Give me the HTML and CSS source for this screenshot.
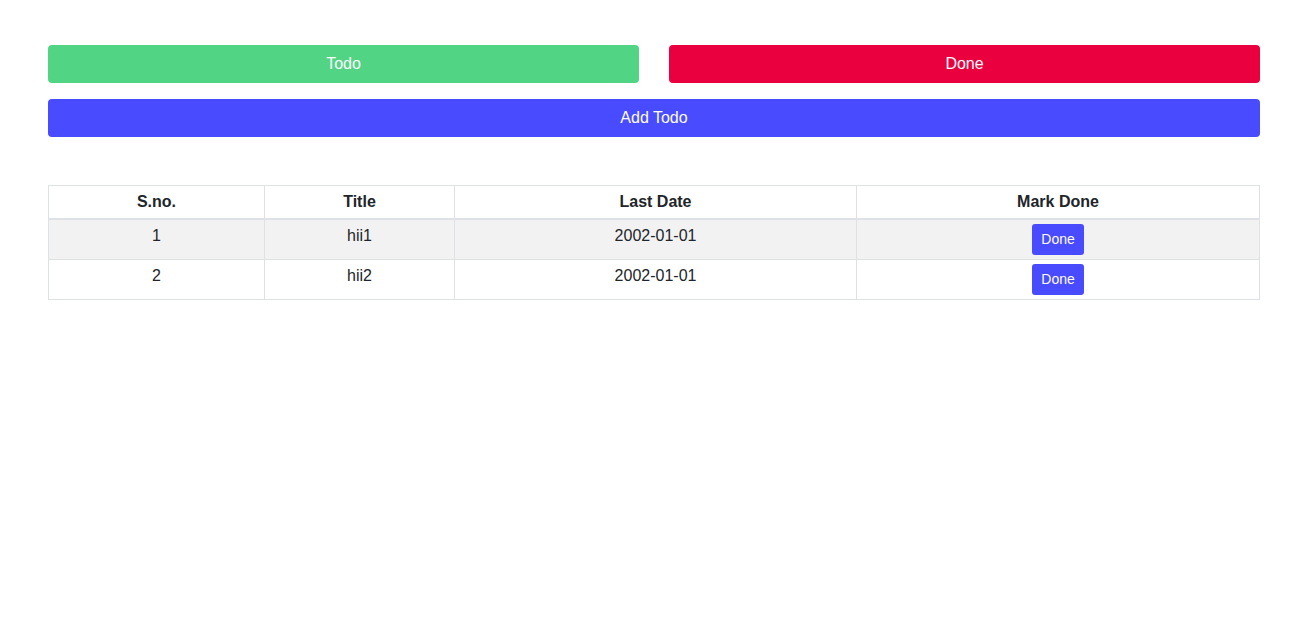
FILE: index.html
```html
<!DOCTYPE html>
<html>
<head>
<meta charset="utf-8">
<link rel="stylesheet" href="styles.css">
</head>
<body>
<div class="page">
  <div class="tabs">
    <button class="btn btn-todo">Todo</button>
    <button class="btn btn-done">Done</button>
  </div>
  <button class="btn btn-add">Add Todo</button>
  <table class="todo-table">
    <thead>
      <tr>
        <th class="c1">S.no.</th>
        <th class="c2">Title</th>
        <th class="c3">Last Date</th>
        <th class="c4">Mark Done</th>
      </tr>
    </thead>
    <tbody>
      <tr class="striped">
        <td>1</td>
        <td>hii1</td>
        <td>2002-01-01</td>
        <td><button class="btn-sm">Done</button></td>
      </tr>
      <tr>
        <td>2</td>
        <td>hii2</td>
        <td>2002-01-01</td>
        <td><button class="btn-sm">Done</button></td>
      </tr>
    </tbody>
  </table>
</div>
</body>
</html>
```
FILE: styles.css
```css
* { box-sizing: border-box; }
html, body { margin: 0; padding: 0; background: #fff; }
body {
  font-family: "Liberation Sans", Arial, sans-serif;
  font-size: 16px;
  line-height: 1.5;
  color: #212529;
}
.page {
  width: 1212px;
  margin-left: 48px;
  padding-top: 45px;
}
.tabs {
  display: flex;
  gap: 30px;
  margin-bottom: 16px;
}
.btn {
  display: block;
  width: 100%;
  height: 38px;
  border: 1px solid transparent;
  border-radius: 4px;
  font-family: inherit;
  font-size: 16px;
  line-height: 24px;
  padding: 6px 12px;
  color: #fff;
  cursor: pointer;
}
.tabs .btn { flex: 1; }
.btn-todo { background: #51d484; }
.btn-done { background: #ea003f; }
.btn-add { background: #484bff; }
.todo-table {
  margin-top: 48px;
  width: 1211px;
  border-collapse: collapse;
  table-layout: fixed;
}
.todo-table th, .todo-table td {
  border: 1px solid #dee2e6;
  text-align: center;
  vertical-align: top;
  padding: 4px;
  line-height: 24px;
}
.todo-table th { border-bottom-width: 2px; font-weight: bold; }
.c1 { width: 216px; }
.c2 { width: 190px; }
.c3 { width: 402px; }
.c4 { width: 403px; }
.striped td { background: #f2f2f2; }
.btn-sm {
  display: inline-block;
  width: 52px;
  height: 31px;
  padding: 4px 0;
  border: 1px solid transparent;
  border-radius: 3px;
  background: #484bff;
  color: #fff;
  font-family: inherit;
  font-size: 14px;
  line-height: 21px;
  vertical-align: top;
}
```
